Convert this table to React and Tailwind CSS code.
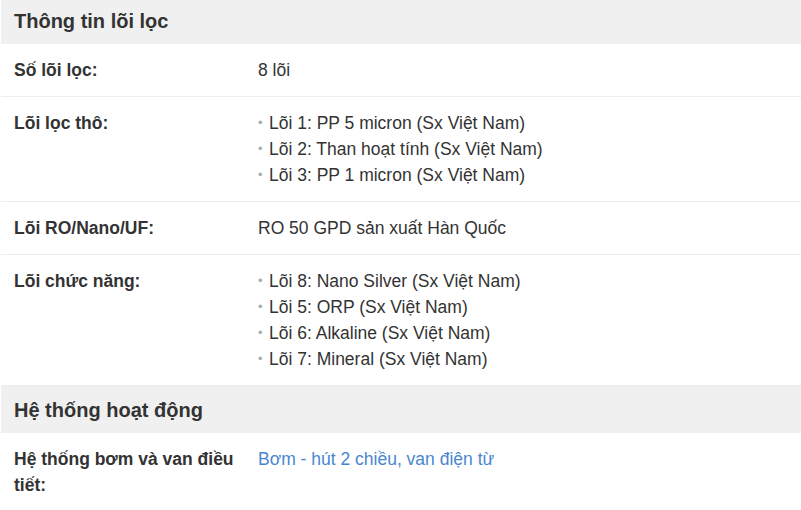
const SECTIONS = [
  {
    title: 'Thông tin lõi lọc',
    rows: [
      { label: 'Số lõi lọc:', value: '8 lõi' },
      {
        label: 'Lõi lọc thô:',
        list: [
          'Lõi 1: PP 5 micron (Sx Việt Nam)',
          'Lõi 2: Than hoạt tính (Sx Việt Nam)',
          'Lõi 3: PP 1 micron (Sx Việt Nam)',
        ],
      },
      { label: 'Lõi RO/Nano/UF:', value: 'RO 50 GPD sản xuất Hàn Quốc' },
      {
        label: 'Lõi chức năng:',
        list: [
          'Lõi 8: Nano Silver (Sx Việt Nam)',
          'Lõi 5: ORP (Sx Việt Nam)',
          'Lõi 6: Alkaline (Sx Việt Nam)',
          'Lõi 7: Mineral (Sx Việt Nam)',
        ],
      },
    ],
  },
  {
    title: 'Hệ thống hoạt động',
    rows: [
      { label: 'Hệ thống bơm và van điều tiết:', value: 'Bơm - hút 2 chiều, van điện từ', link: true },
    ],
  },
]

export default function App() {
  return (
    <div className="bg-white h-[510px] overflow-hidden font-['Liberation_Sans',Arial,sans-serif] text-[#333] pl-[1px]">
      <div className="-mt-[3px]">
        {SECTIONS.map((section) => (
          <div key={section.title}>
            <h3 className="bg-[#f0f0f0] px-[13px] h-[47px] flex items-center text-[20px] font-bold text-[#333]">
              {section.title}
            </h3>
            {section.rows.map((row) => (
              <div key={row.label} className="flex border-b border-[#ececec] text-[17.5px] leading-[26px] py-[13px]">
                <div className="w-[257px] shrink-0 pl-[13px] pr-[14px] font-bold">{row.label}</div>
                <div className="flex-1">
                  {row.list ? (
                    <ul>
                      {row.list.map((item) => (
                        <li key={item} className="flex">
                          <span className="text-[#aaa] text-[13px] w-[11px]">•</span>
                          <span>{item}</span>
                        </li>
                      ))}
                    </ul>
                  ) : row.link ? (
                    <a className="text-[#4a86d0]">{row.value}</a>
                  ) : (
                    row.value
                  )}
                </div>
              </div>
            ))}
          </div>
        ))}
      </div>
    </div>
  )
}
